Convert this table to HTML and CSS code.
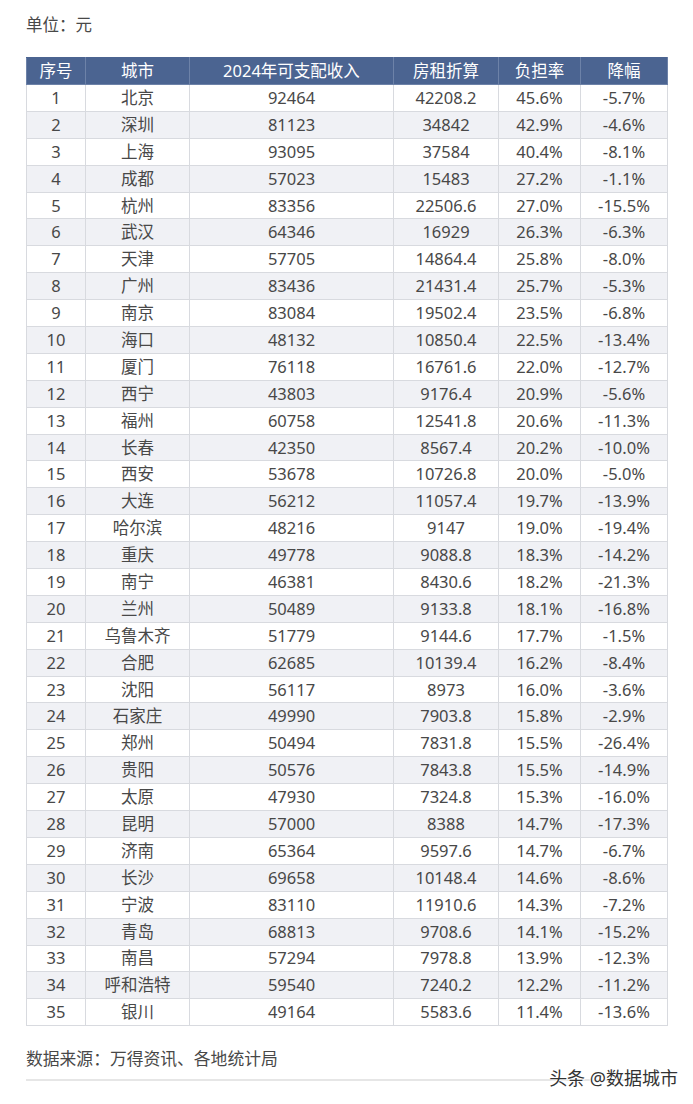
FILE: index.html
```html
<!DOCTYPE html>
<html lang="zh">
<head>
<meta charset="utf-8">
<link rel="stylesheet" href="styles.css">
</head>
<body>
<div class="page">
  <div class="unit">单位：元</div>
  <table class="data">
    <colgroup>
      <col class="c1"><col class="c2"><col class="c3"><col class="c4"><col class="c5"><col class="c6">
    </colgroup>
    <thead>
      <tr><th>序号</th><th>城市</th><th>2024年可支配收入</th><th>房租折算</th><th>负担率</th><th>降幅</th></tr>
    </thead>
    <tbody>
      <tr><td>1</td><td>北京</td><td>92464</td><td>42208.2</td><td>45.6%</td><td>-5.7%</td></tr>
      <tr><td>2</td><td>深圳</td><td>81123</td><td>34842</td><td>42.9%</td><td>-4.6%</td></tr>
      <tr><td>3</td><td>上海</td><td>93095</td><td>37584</td><td>40.4%</td><td>-8.1%</td></tr>
      <tr><td>4</td><td>成都</td><td>57023</td><td>15483</td><td>27.2%</td><td>-1.1%</td></tr>
      <tr><td>5</td><td>杭州</td><td>83356</td><td>22506.6</td><td>27.0%</td><td>-15.5%</td></tr>
      <tr><td>6</td><td>武汉</td><td>64346</td><td>16929</td><td>26.3%</td><td>-6.3%</td></tr>
      <tr><td>7</td><td>天津</td><td>57705</td><td>14864.4</td><td>25.8%</td><td>-8.0%</td></tr>
      <tr><td>8</td><td>广州</td><td>83436</td><td>21431.4</td><td>25.7%</td><td>-5.3%</td></tr>
      <tr><td>9</td><td>南京</td><td>83084</td><td>19502.4</td><td>23.5%</td><td>-6.8%</td></tr>
      <tr><td>10</td><td>海口</td><td>48132</td><td>10850.4</td><td>22.5%</td><td>-13.4%</td></tr>
      <tr><td>11</td><td>厦门</td><td>76118</td><td>16761.6</td><td>22.0%</td><td>-12.7%</td></tr>
      <tr><td>12</td><td>西宁</td><td>43803</td><td>9176.4</td><td>20.9%</td><td>-5.6%</td></tr>
      <tr><td>13</td><td>福州</td><td>60758</td><td>12541.8</td><td>20.6%</td><td>-11.3%</td></tr>
      <tr><td>14</td><td>长春</td><td>42350</td><td>8567.4</td><td>20.2%</td><td>-10.0%</td></tr>
      <tr><td>15</td><td>西安</td><td>53678</td><td>10726.8</td><td>20.0%</td><td>-5.0%</td></tr>
      <tr><td>16</td><td>大连</td><td>56212</td><td>11057.4</td><td>19.7%</td><td>-13.9%</td></tr>
      <tr><td>17</td><td>哈尔滨</td><td>48216</td><td>9147</td><td>19.0%</td><td>-19.4%</td></tr>
      <tr><td>18</td><td>重庆</td><td>49778</td><td>9088.8</td><td>18.3%</td><td>-14.2%</td></tr>
      <tr><td>19</td><td>南宁</td><td>46381</td><td>8430.6</td><td>18.2%</td><td>-21.3%</td></tr>
      <tr><td>20</td><td>兰州</td><td>50489</td><td>9133.8</td><td>18.1%</td><td>-16.8%</td></tr>
      <tr><td>21</td><td>乌鲁木齐</td><td>51779</td><td>9144.6</td><td>17.7%</td><td>-1.5%</td></tr>
      <tr><td>22</td><td>合肥</td><td>62685</td><td>10139.4</td><td>16.2%</td><td>-8.4%</td></tr>
      <tr><td>23</td><td>沈阳</td><td>56117</td><td>8973</td><td>16.0%</td><td>-3.6%</td></tr>
      <tr><td>24</td><td>石家庄</td><td>49990</td><td>7903.8</td><td>15.8%</td><td>-2.9%</td></tr>
      <tr><td>25</td><td>郑州</td><td>50494</td><td>7831.8</td><td>15.5%</td><td>-26.4%</td></tr>
      <tr><td>26</td><td>贵阳</td><td>50576</td><td>7843.8</td><td>15.5%</td><td>-14.9%</td></tr>
      <tr><td>27</td><td>太原</td><td>47930</td><td>7324.8</td><td>15.3%</td><td>-16.0%</td></tr>
      <tr><td>28</td><td>昆明</td><td>57000</td><td>8388</td><td>14.7%</td><td>-17.3%</td></tr>
      <tr><td>29</td><td>济南</td><td>65364</td><td>9597.6</td><td>14.7%</td><td>-6.7%</td></tr>
      <tr><td>30</td><td>长沙</td><td>69658</td><td>10148.4</td><td>14.6%</td><td>-8.6%</td></tr>
      <tr><td>31</td><td>宁波</td><td>83110</td><td>11910.6</td><td>14.3%</td><td>-7.2%</td></tr>
      <tr><td>32</td><td>青岛</td><td>68813</td><td>9708.6</td><td>14.1%</td><td>-15.2%</td></tr>
      <tr><td>33</td><td>南昌</td><td>57294</td><td>7978.8</td><td>13.9%</td><td>-12.3%</td></tr>
      <tr><td>34</td><td>呼和浩特</td><td>59540</td><td>7240.2</td><td>12.2%</td><td>-11.2%</td></tr>
      <tr><td>35</td><td>银川</td><td>49164</td><td>5583.6</td><td>11.4%</td><td>-13.6%</td></tr>
    </tbody>
  </table>
  <div class="source">数据来源：万得资讯、各地统计局</div>
  <div class="rule"></div>
  <div class="mark">头条 @数据城市</div>
</div>
</body>
</html>
```

FILE: styles.css
```css
* { box-sizing: border-box; }
html, body { margin: 0; padding: 0; background: #fff; }
body {
  font-family: "Noto Sans", "Noto Sans CJK SC", sans-serif;
  color: #484848;
  width: 693px;
  height: 1104px;
  overflow: hidden;
}
.page {
  position: relative;
  padding: 13px 0 0 26px;
  height: 1104px;
}
.unit {
  font-size: 16.5px;
  line-height: 24px;
  color: #484848;
}
.data {
  margin-top: 20px;
  border-collapse: collapse;
  table-layout: fixed;
  width: 641px;
  font-size: 16.5px;
}
.c1 { width: 59px; }
.c2 { width: 104px; }
.c3 { width: 204px; }
.c4 { width: 105px; }
.c5 { width: 82px; }
.c6 { width: 87px; }
.data th {
  background: #4b6491;
  color: #fff;
  font-weight: normal;
  height: 27px;
  padding: 0;
  border: 1px solid #6d82a8;
  border-top-color: #4b6491;
  line-height: 24px;
  text-align: center;
}
.data td {
  height: 26.9px;
  padding: 0;
  border: 1px solid #d8dadf;
  text-align: center;
  line-height: 24px;
  color: #484848;
}
.data tbody tr:nth-child(even) td { background: #f0f1f5; }
.source {
  margin-top: 21px;
  font-size: 16.8px;
  line-height: 24px;
  color: #484848;
}
.rule {
  margin-top: 8px;
  width: 610px;
  height: 2px;
  background: #e6e6e6;
}
.mark {
  position: absolute;
  right: 15px;
  top: 1065px;
  font-size: 18px;
  line-height: 26px;
  color: #333;
  text-shadow: 0 0 1px #fff, 0 0 2px #fff, 1px 1px 0 #fff, -1px -1px 0 #fff;
}
```
